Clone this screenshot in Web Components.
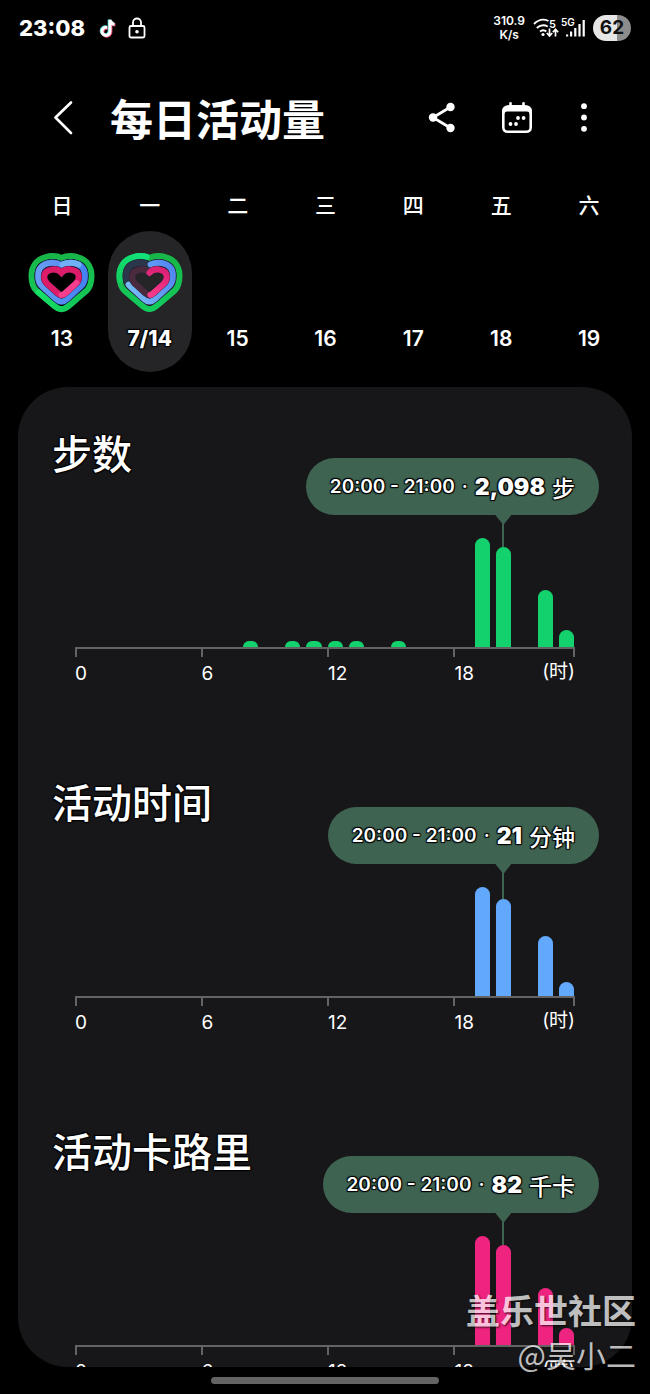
<!DOCTYPE html>
<html lang="zh-CN">
<head>
<meta charset="utf-8">
<meta name="viewport" content="width=device-width, initial-scale=1">
<title>每日活动量</title>
<style>
    body {
        margin: 0;
        background-color: #000;
        color: #fff;
        font-family: Inter, "Noto Sans CJK SC", sans-serif;
    }
</style>
</head>
<body>
<activity-app></activity-app>

<script>
class StatusBar extends HTMLElement {
    constructor() {
        super();

        this.attachShadow({ mode: 'open' });

        this.shadowRoot.innerHTML = `
            <style>
                :host {
                    display: flex;
                    align-items: center;
                    justify-content: space-between;
                    height: 56px;
                    padding: 0 19px;
                }

                .side {
                    display: flex;
                    align-items: center;
                }

                svg {
                    display: block;
                }

                .time {
                    font-size: 22px;
                    font-weight: 800;
                    line-height: 28px;
                    margin-right: 14px;
                }

                .lock {
                    margin-left: 11px;
                }

                .speed {
                    font-size: 12px;
                    font-weight: 600;
                    line-height: 14px;
                    text-align: center;
                    margin-right: 8px;
                }

                .battery {
                    width: 38px;
                    height: 26px;
                    border-radius: 13px;
                    margin-left: 6px;
                    background: linear-gradient(to right, #e6e6e6 62%, #8c8c8c 62%);
                    color: #111;
                    font-size: 19px;
                    font-weight: 700;
                    line-height: 26px;
                    text-align: center;
                }

                text {
                    fill: #fff;
                    font-family: Inter, sans-serif;
                    font-weight: 600;
                }
            </style>
            <div class="side">
                <span class="time">23:08</span>
                <svg width="18" height="20" viewBox="0 0 18 20" fill="none" stroke-width="3">
                    <path d="M8 9.500a4 4 0 1 0 3 4V2c.4 2.600 2 4 4.500 4.300" stroke="#e8476a" transform="translate(.9 .8)"/>
                    <path d="M8 9.500a4 4 0 1 0 3 4V2c.4 2.600 2 4 4.500 4.300" stroke="#4fe0dc" transform="translate(-.8 -.6)"/>
                    <path d="M8 9.500a4 4 0 1 0 3 4V2c.4 2.600 2 4 4.500 4.300" stroke="#fff"/>
                </svg>
                <svg class="lock" width="18" height="22" viewBox="0 0 18 22" fill="none" stroke="#fff" stroke-width="1.8">
                    <rect x="1.500" y="9" width="15" height="11.500" rx="1.500"/>
                    <path d="M5 9V5.500a4 4 0 0 1 8 0V9"/>
                    <circle cx="9" cy="14.700" r="1.800" fill="#fff" stroke="none"/>
                </svg>
            </div>
            <div class="side">
                <div class="speed">310.9<br>K/s</div>
                <svg width="28" height="22" viewBox="0 0 28 22" fill="none" stroke="#fff" stroke-width="1.900">
                    <path d="M1 7C5.500 2.500 11 1.800 15.500 4M3.800 11c3.500-3 7.500-3.300 11-1.500M7 14.500c2-1.600 4.500-1.600 6.300 0"/>
                    <circle cx="10" cy="17.500" r="1.600" fill="#fff" stroke="none"/>
                    <path d="M16.500 11.500v7M13.800 16l2.700 3 2.700-3M22.500 19.500v-7M19.800 15.300l2.700-3 2.700 3" stroke-width="1.700"/>
                    <text x="16" y="10.500" font-size="11" stroke="none">5</text>
                </svg>
                <svg width="26" height="22" viewBox="0 0 26 22">
                    <text x="0" y="9" font-size="10">5G</text>
                    <path d="M5 17.500h2.200v2H5zM9 14.500h2.200v5H9zM13.200 11h2.200v8.500h-2.200zM17.400 7h2.200v12.500h-2.200zM21.600 3h2.200v16.500h-2.200z" fill="#fff"/>
                </svg>
                <div class="battery">62</div>
            </div>
        `;
    }
}

class AppHeader extends HTMLElement {
    constructor() {
        super();

        this.attachShadow({ mode: 'open' });

        this.shadowRoot.innerHTML = `
            <style>
                :host {
                    display: flex;
                    align-items: center;
                    height: 124px;
                    padding: 0 58px 0 47px;
                }

                h1 {
                    flex: 1;
                    margin: 0 0 0 31px;
                    padding-top: 3px;
                    font-size: 43px;
                    font-weight: 700;
                    line-height: 60px;
                    white-space: nowrap;
                }

                nav {
                    display: flex;
                    gap: 43px;
                }

                button {
                    display: block;
                    padding: 0;
                    border: none;
                    background: none;
                    color: inherit;
                    cursor: pointer;
                }

                svg {
                    display: block;
                }
            </style>
            <button aria-label="返回">
                <svg width="32" height="36" viewBox="0 0 32 36" fill="none" stroke="#fff" stroke-width="2.700" stroke-linecap="round" stroke-linejoin="round">
                    <path d="M24 2.500L8.500 17.500L24 33"/>
                </svg>
            </button>
            <h1><slot></slot></h1>
            <nav>
                <button aria-label="分享">
                    <svg width="32" height="36" viewBox="0 0 32 36" fill="#fff">
                        <path d="M24.500 7L7 17.500L24.500 28" fill="none" stroke="#fff" stroke-width="2.800"/>
                        <circle cx="24.500" cy="7" r="4.200"/>
                        <circle cx="7" cy="17.500" r="4.200"/>
                        <circle cx="24.500" cy="28" r="4.200"/>
                    </svg>
                </button>
                <button aria-label="日历">
                    <svg width="32" height="36" viewBox="0 0 32 36" fill="#fff">
                        <path fill-rule="evenodd" d="M9.500 2q1.300 0 1.300 1.300V5h10.400V3.300Q21.200 2 22.500 2t1.300 1.300V5Q31 5 31 11.500V27q0 6-6 6H7q-6 0-6-6V11.500Q1 5 8.200 5V3.300Q8.200 2 9.500 2zM6 11.500q-2.400 0-2.400 2.400V27.500q0 3 3 3h18.800q3 0 3-3V13.900q0-2.400-2.400-2.400z"/>
                        <circle cx="17" cy="18" r="1.900"/>
                        <circle cx="22.600" cy="18" r="1.900"/>
                        <circle cx="9.500" cy="24" r="1.900"/>
                        <circle cx="15" cy="24" r="1.900"/>
                    </svg>
                </button>
                <button aria-label="更多选项">
                    <svg width="16" height="36" viewBox="0 0 16 36" fill="#fff">
                        <circle cx="8" cy="6.200" r="2.900"/>
                        <circle cx="8" cy="17.500" r="2.900"/>
                        <circle cx="8" cy="28.800" r="2.900"/>
                    </svg>
                </button>
            </nav>
        `;
    }
}

// Every ring starts at the dip of the heart and runs clockwise
const RINGS = {
    outer: 'M100 15C114 8 134 8 150 13C176 20 190 42 190 68C190 88 184 105 174 114L120 160C106 172 94 172 80 160L26 114C16 105 10 88 10 68C10 42 24 20 50 13C66 8 86 8 100 15Z',
    middle: 'M100 36C112 29 130 28 142 31C160 36 170 50 170 68C170 82 166 93 158 100L116 138C104 149 96 149 84 138L42 100C34 93 30 82 30 68C30 50 40 36 58 31C70 28 88 29 100 36Z',
    inner: 'M100 59C108 50 120 48 130 50C144 52 152 60 152 72C152 80 149 86 143 92L112 120C103 128 97 128 88 120L57 92C51 86 48 80 48 72C48 60 56 52 70 50C80 48 92 50 100 59Z'
};

class HeartRings extends HTMLElement {
    constructor() {
        super();
        this.attachShadow({ mode: 'open' });
    }

    connectedCallback() {
        const full = this.getAttribute('state') === 'full';

        const part = (ring, color, from, to) => `
            <path d="${RINGS[ring]}" pathLength="100" stroke="${color}" stroke-linecap="round"
                stroke-dasharray="${to - from} 200" stroke-dashoffset="${-from}"/>`;

        const track = (ring, color) => `<path d="${RINGS[ring]}" stroke="${color}"/>`;

        const rings = full ? `
            ${track('outer', 'url(#green)')}
            ${part('outer', 'url(#green-end)', 40, 66)}
            <path d="${RINGS.middle}" stroke="#1d2a52" stroke-width="22"/>
            ${track('middle', 'url(#blue)')}
            ${part('middle', '#70b0f4', 1, 13)}
            <path d="${RINGS.inner}" stroke="#3a1840" stroke-width="20"/>
            ${track('inner', '#dc1c68')}
            ${part('inner', '#f53f8c', 30, 50)}
        ` : `
            ${track('outer', 'url(#green)')}
            ${part('outer', 'url(#green-top)', 74, 98)}
            <path d="${RINGS.middle}" stroke="#23283a" stroke-width="22"/>
            ${track('middle', '#2b364b')}
            ${part('middle', 'url(#blue-part)', 1, 70)}
            <path d="${RINGS.inner}" stroke="#2a2038" stroke-width="20"/>
            ${track('inner', '#4a2a3d')}
            ${part('inner', 'url(#pink-part)', 0, 49)}
        `;

        this.shadowRoot.innerHTML = `
            <style>
                :host {
                    display: block;
                }

                svg {
                    display: block;
                }
            </style>
            <svg width="67" height="60" viewBox="0 0 200 180" fill="none" stroke-width="18">
                <defs>
                    <linearGradient id="green" gradientUnits="userSpaceOnUse" x1="100" y1="10" x2="100" y2="170">
                        <stop offset="0" stop-color="#18b648"/>
                        <stop offset="1" stop-color="#12cc5c"/>
                    </linearGradient>
                    <linearGradient id="green-end" gradientUnits="userSpaceOnUse" x1="150" y1="140" x2="20" y2="120">
                        <stop offset="0" stop-color="#12c456"/>
                        <stop offset="1" stop-color="#16e468"/>
                    </linearGradient>
                    <linearGradient id="green-top" gradientUnits="userSpaceOnUse" x1="20" y1="110" x2="100" y2="10">
                        <stop offset="0" stop-color="#12cc5c"/>
                        <stop offset="1" stop-color="#12e47c"/>
                    </linearGradient>
                    <linearGradient id="blue" gradientUnits="userSpaceOnUse" x1="30" y1="40" x2="170" y2="60">
                        <stop offset="0" stop-color="#689cf2"/>
                        <stop offset="1" stop-color="#4682f2"/>
                    </linearGradient>
                    <linearGradient id="blue-part" gradientUnits="userSpaceOnUse" x1="165" y1="50" x2="35" y2="110">
                        <stop offset="0" stop-color="#5488f2"/>
                        <stop offset="1" stop-color="#78bcf6"/>
                    </linearGradient>
                    <linearGradient id="pink-part" gradientUnits="userSpaceOnUse" x1="130" y1="50" x2="110" y2="130">
                        <stop offset="0" stop-color="#dc2074"/>
                        <stop offset="1" stop-color="#fa3c8c"/>
                    </linearGradient>
                </defs>
                ${rings}
            </svg>
        `;
    }
}

class WeekDay extends HTMLElement {
    constructor() {
        super();

        this.attachShadow({ mode: 'open' });

        this.shadowRoot.innerHTML = `
            <style>
                :host {
                    display: flex;
                    flex-direction: column;
                    align-items: center;
                    gap: 9px;
                }

                .name {
                    font-size: 21px;
                    font-weight: 500;
                    line-height: 32px;
                }

                button {
                    display: flex;
                    flex-direction: column;
                    align-items: center;
                    gap: 11px;
                    width: 84px;
                    padding: 22px 0 18px;
                    border: none;
                    border-radius: 42px;
                    background: none;
                    color: inherit;
                    font: inherit;
                    cursor: pointer;
                }

                .rings {
                    height: 60px;
                }

                .date {
                    font-size: 21px;
                    font-weight: 600;
                    line-height: 30px;
                }

                :host([selected]) button {
                    background-color: #252528;
                }

                :host([selected]) .date {
                    font-weight: 800;
                    text-shadow: 1px 1px 1px #000, -1px -1px 1px #000, 1px -1px 1px #000, -1px 1px 1px #000;
                }
            </style>
            <span class="name"></span>
            <button>
                <span class="rings"><slot></slot></span>
                <span class="date"></span>
            </button>
        `;
    }

    connectedCallback() {
        this.shadowRoot.querySelector('.name').textContent = this.getAttribute('name');
        this.shadowRoot.querySelector('.date').textContent = this.getAttribute('date');
    }
}

class WeekStrip extends HTMLElement {
    constructor() {
        super();

        this.attachShadow({ mode: 'open' });

        this.shadowRoot.innerHTML = `
            <style>
                :host {
                    display: grid;
                    grid-template-columns: repeat(7, 1fr);
                    padding: 10px 17px 15px 18px;
                }
            </style>
            <week-day name="日" date="13"><heart-rings state="full"></heart-rings></week-day>
            <week-day name="一" date="7/14" selected><heart-rings state="partial"></heart-rings></week-day>
            <week-day name="二" date="15"></week-day>
            <week-day name="三" date="16"></week-day>
            <week-day name="四" date="17"></week-day>
            <week-day name="五" date="18"></week-day>
            <week-day name="六" date="19"></week-day>
        `;
    }
}

class HourChart extends HTMLElement {
    constructor() {
        super();

        this.attachShadow({ mode: 'open' });

        this.shadowRoot.innerHTML = `
            <style>
                :host {
                    display: block;
                    margin-bottom: 92px;
                    --tip: #3f6351;
                }

                .head {
                    display: flex;
                    justify-content: space-between;
                    align-items: flex-start;
                    padding: 0 33px 0 34px;
                }

                h2 {
                    margin: 0;
                    font-size: 40px;
                    font-weight: 500;
                    line-height: 42px;
                    white-space: nowrap;
                }

                h2, .tip {
                    text-shadow: 1px 1px 1px #000, -1px -1px 1px #000, 1px -1px 1px #000, -1px 1px 1px #000;
                }

                .tip {
                    display: flex;
                    align-items: center;
                    gap: 7px;
                    height: 57px;
                    margin-top: 24px;
                    padding: 0 24px;
                    border-radius: 29px;
                    background-color: var(--tip);
                    font-size: 19px;
                    font-weight: 600;
                    line-height: 28px;
                    white-space: nowrap;
                }

                .tip strong {
                    font-size: 23px;
                    font-weight: 900;
                }

                .unit {
                    font-family: "Noto Sans CJK SC", sans-serif;
                    font-size: 23px;
                    font-weight: 500;
                }

                .plot, .axis, .labels {
                    display: grid;
                    grid-template-columns: repeat(24, minmax(0, 1fr));
                    column-gap: 6px;
                    margin: 0 58px 0 57px;
                }

                .plot {
                    height: 132px;
                }

                .hour {
                    display: flex;
                    flex-direction: column;
                    justify-content: flex-end;
                    align-items: center;
                }

                .bar {
                    width: 100%;
                    border-radius: 8px 8px 0 0;
                    background-color: var(--bar);
                }

                .stem {
                    flex: 1;
                    width: 16px;
                    background: linear-gradient(var(--tip), var(--tip)) center / 2px 100% no-repeat;
                }

                .stem::before {
                    content: "";
                    display: block;
                    height: 10px;
                    background-color: var(--tip);
                    clip-path: polygon(0 0, 100% 0, 50% 100%);
                }

                .axis {
                    height: 8px;
                    border-top: 2px solid #636363;
                    border-right: 2px solid #636363;
                    margin-right: 57px;
                }

                .axis span {
                    grid-column: span 6;
                    border-left: 2px solid #636363;
                }

                .labels {
                    font-size: 19px;
                    line-height: 34px;
                    margin-right: 57px;
                }

                .labels > * {
                    grid-column: span 6;
                }

                .last {
                    display: flex;
                    justify-content: space-between;
                }

                .hours {
                    line-height: 30px;
                }
            </style>
            <div class="head">
                <h2><slot></slot></h2>
                <div class="tip">
                    <span class="range"></span>
                    <span>·</span>
                    <strong></strong>
                    <span class="unit"></span>
                </div>
            </div>
            <div class="plot"></div>
            <div class="axis"><span></span><span></span><span></span><span></span></div>
            <div class="labels">
                <span>0</span>
                <span>6</span>
                <span>12</span>
                <div class="last"><span>18</span><span class="hours">(时)</span></div>
            </div>
        `;
    }

    connectedCallback() {
        const root = this.shadowRoot;
        const selected = Number(this.getAttribute('hour'));
        // "hour:height" pairs
        const bars = new Map(this.getAttribute('bars').split(' ').map(b => b.split(':').map(Number)));

        this.style.setProperty('--bar', this.getAttribute('color'));
        root.querySelector('.range').textContent = `${selected}:00 - ${selected + 1}:00`;
        root.querySelector('strong').textContent = this.getAttribute('value');
        root.querySelector('.unit').textContent = this.getAttribute('unit');

        let html = '';
        for (let h = 0; h < 24; h++) {
            html += `<div class="hour">
                ${h === selected ? '<div class="stem"></div>' : ''}
                ${bars.has(h) ? `<div class="bar" style="height: ${bars.get(h)}px"></div>` : ''}
            </div>`;
        }
        root.querySelector('.plot').innerHTML = html;
    }
}

class PhotoMark extends HTMLElement {
    constructor() {
        super();

        this.attachShadow({ mode: 'open' });

        this.shadowRoot.innerHTML = `
            <style>
                :host {
                    position: absolute;
                    right: 14px;
                    bottom: 18px;
                    text-align: right;
                    color: #fff;
                    opacity: .72;
                    text-shadow: 1px 1px 2px #000;
                    font-family: "Noto Sans CJK SC", sans-serif;
                    pointer-events: none;
                }

                div {
                    font-size: 34px;
                    font-weight: 700;
                    line-height: 44px;
                }

                .user {
                    font-size: 30px;
                    font-weight: 400;
                }
            </style>
            <div>盖乐世社区</div>
            <div class="user">@吴小二</div>
        `;
    }
}

class ActivityApp extends HTMLElement {
    constructor() {
        super();

        this.attachShadow({ mode: 'open' });

        this.shadowRoot.innerHTML = `
            <style>
                :host {
                    display: flex;
                    flex-direction: column;
                    position: relative;
                    height: 100vh;
                    overflow: hidden;
                }

                main {
                    flex: 1;
                    min-height: 0;
                    margin: 0 18px;
                    padding-top: 47px;
                    box-sizing: border-box;
                    border-radius: 50px;
                    background-color: #17171a;
                    overflow: hidden;
                }

                footer {
                    display: flex;
                    justify-content: center;
                    align-items: center;
                    height: 27px;
                }

                .handle {
                    width: 35%;
                    height: 7px;
                    border-radius: 4px;
                    background-color: #636363;
                }
            </style>
            <status-bar></status-bar>
            <app-header>每日活动量</app-header>
            <week-strip></week-strip>
            <main>
                <hour-chart color="#13d16d" hour="20" value="2,098" unit="步"
                    bars="8:6 10:6 11:6 12:6 13:6 15:6 19:109 20:100 22:57 23:17">步数</hour-chart>
                <hour-chart color="#62a8fc" hour="20" value="21" unit="分钟"
                    bars="19:109 20:97 22:60 23:14">活动时间</hour-chart>
                <hour-chart color="#ef2480" hour="20" value="82" unit="千卡"
                    bars="19:109 20:100 22:57 23:17">活动卡路里</hour-chart>
            </main>
            <footer><div class="handle"></div></footer>
            <photo-mark></photo-mark>
        `;
    }
}

customElements.define('status-bar', StatusBar);
customElements.define('app-header', AppHeader);
customElements.define('heart-rings', HeartRings);
customElements.define('week-day', WeekDay);
customElements.define('week-strip', WeekStrip);
customElements.define('hour-chart', HourChart);
customElements.define('photo-mark', PhotoMark);
customElements.define('activity-app', ActivityApp);
</script>
</body>
</html>
